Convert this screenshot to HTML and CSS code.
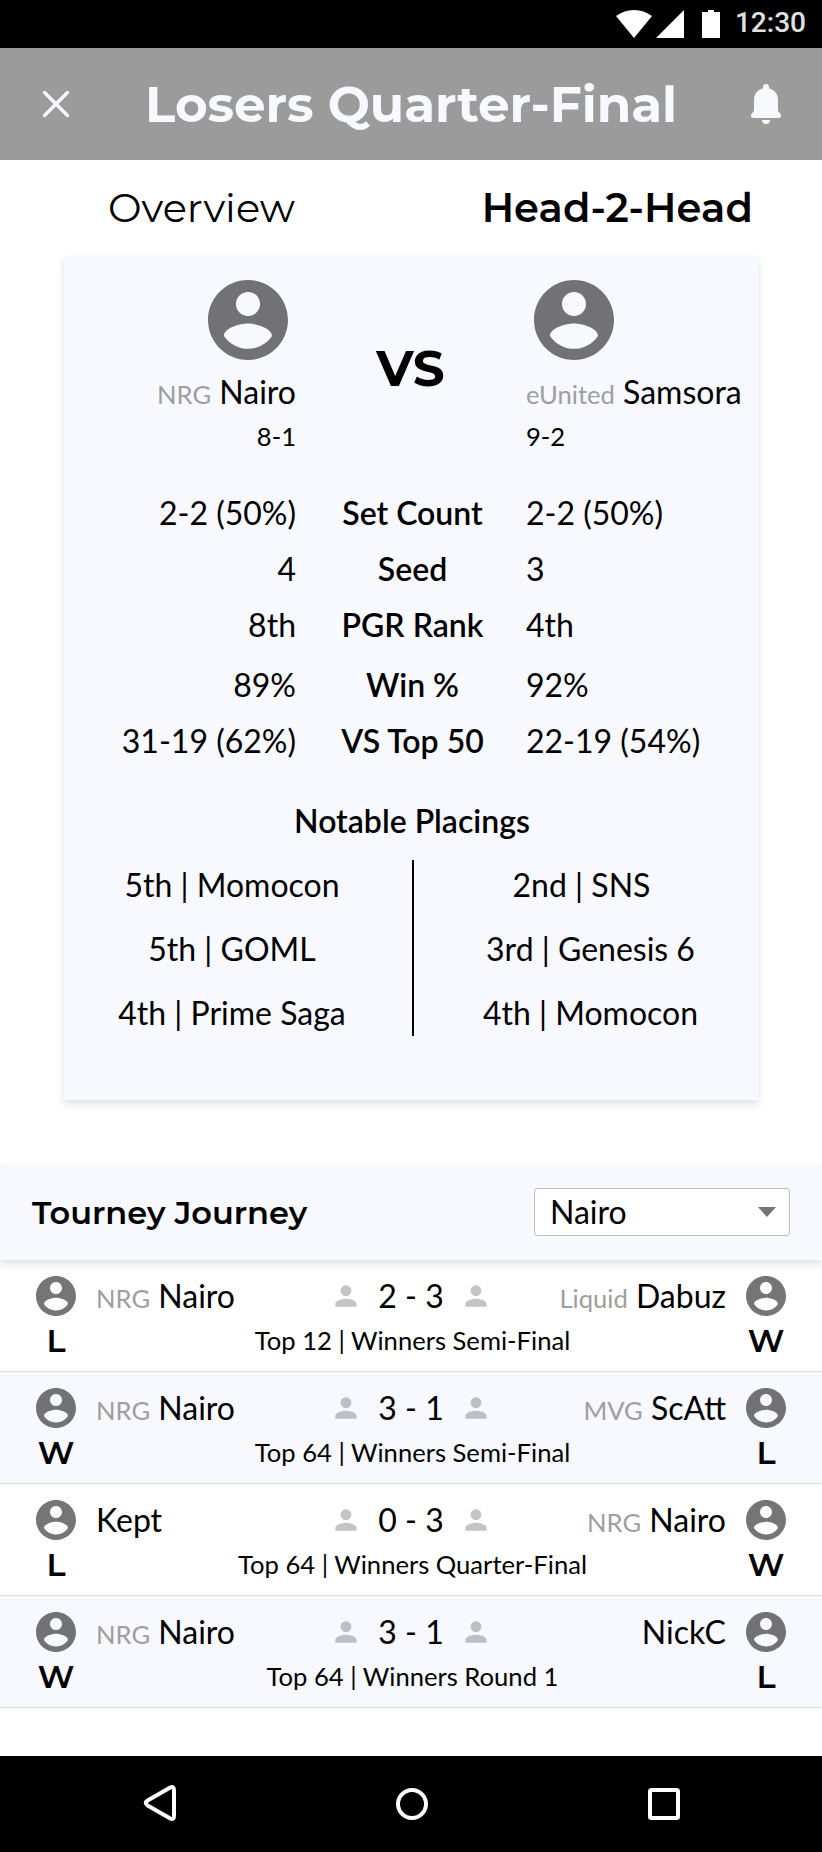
FILE: index.html
```html
<!DOCTYPE html>
<html lang="en">
<head>
<meta charset="utf-8">
<title>Losers Quarter-Final</title>
<link rel="stylesheet" href="styles.css">
</head>
<body>
<svg class="defs" width="0" height="0" aria-hidden="true">
  <symbol id="account" viewBox="2 2 20 20"><path d="M12 2C6.48 2 2 6.48 2 12s4.48 10 10 10 10-4.48 10-10S17.520 2 12 2zm0 3c1.66 0 3 1.340 3 3s-1.340 3-3 3-3-1.340-3-3 1.340-3 3-3zm0 14.200c-2.500 0-4.710-1.280-6-3.220.03-1.990 4-3.080 6-3.080 1.990 0 5.970 1.090 6 3.080-1.290 1.940-3.500 3.220-6 3.220z"/></symbol>
  <symbol id="person" viewBox="0 0 24 24"><path d="M12 12c2.210 0 4-1.790 4-4s-1.790-4-4-4-4 1.790-4 4 1.790 4 4 4zm0 2c-2.670 0-8 1.340-8 4v2h16v-2c0-2.660-5.330-4-8-4z"/></symbol>
</svg>

<div class="status">
  <svg width="104" height="28" viewBox="0 0 104 28"><path d="M0 6Q8 0 18 0T36 6L18 28zM40 28h28V0zM86 2h6V0h6v2h6v26H86z"/></svg>
  <span class="clock">12:30</span>
</div>

<header class="header">
  <svg class="close" width="28" height="28" viewBox="0 0 28 28"><path d="M2.500 2.500l23 23M25.500 2.500l-23 23"/></svg>
  <h1>Losers Quarter-Final</h1>
  <svg class="bell" width="30" height="40" viewBox="0 0 30 40"><path d="M15 0a3 3 0 0 0-3 3v1.300C6.500 5.800 3 10.200 3 16v9.500c0 1.500-.5 2.200-1.300 3C.7 29.400 0 30.300 0 31.800 0 33.200.8 34 2.200 34h25.600c1.400 0 2.200-.8 2.200-2.200 0-1.500-.7-2.400-1.700-3.300-.8-.8-1.300-1.500-1.300-3V16c0-5.800-3.500-10.200-9-11.700V3a3 3 0 0 0-3-3zM11 36h8a4 4 0 0 1-8 0z"/></svg>
</header>

<nav class="tabs"><span>Overview</span><span class="active">Head-2-Head</span></nav>

<section class="card">
  <div class="versus">
    <div class="player left">
      <svg class="avatar-lg"><use href="#account"/></svg>
      <div class="name"><small>NRG</small> Nairo</div>
      <div class="record">8-1</div>
    </div>
    <div class="vs">VS</div>
    <div class="player">
      <svg class="avatar-lg"><use href="#account"/></svg>
      <div class="name"><small>eUnited</small> Samsora</div>
      <div class="record">9-2</div>
    </div>
  </div>
  <div class="stats">
    <span>2-2 (50%)</span><b>Set Count</b><span>2-2 (50%)</span>
    <span>4</span><b>Seed</b><span>3</span>
    <span>8th</span><b>PGR Rank</b><span>4th</span>
    <span>89%</span><b>Win %</b><span>92%</span>
    <span>31-19 (62%)</span><b>VS Top 50</b><span>22-19 (54%)</span>
  </div>
  <h2 class="placings-title">Notable Placings</h2>
  <div class="placings">
    <ul><li>5th | Momocon</li><li>5th | GOML</li><li>4th | Prime Saga</li></ul>
    <i class="divider"></i>
    <ul><li class="nudged">2nd | SNS</li><li>3rd | Genesis 6</li><li>4th | Momocon</li></ul>
  </div>
</section>

<section class="journey">
  <div class="journey-head">
    <h2>Tourney Journey</h2>
    <div class="select">Nairo<svg width="18" height="10" viewBox="0 0 18 10"><path d="M0 0h18L9 10z"/></svg></div>
  </div>

  <div class="match">
    <div class="side"><svg class="avatar"><use href="#account"/></svg><b>L</b></div>
    <div class="info">
      <div class="name"><small>NRG</small> Nairo</div>
      <div class="score"><svg><use href="#person"/></svg><span>2 - 3</span><svg><use href="#person"/></svg></div>
      <div class="name right"><small>Liquid</small> Dabuz</div>
      <div class="round">Top 12 | Winners Semi-Final</div>
    </div>
    <div class="side"><svg class="avatar"><use href="#account"/></svg><b>W</b></div>
  </div>

  <div class="match">
    <div class="side"><svg class="avatar"><use href="#account"/></svg><b>W</b></div>
    <div class="info">
      <div class="name"><small>NRG</small> Nairo</div>
      <div class="score"><svg><use href="#person"/></svg><span>3 - 1</span><svg><use href="#person"/></svg></div>
      <div class="name right"><small>MVG</small> ScAtt</div>
      <div class="round">Top 64 | Winners Semi-Final</div>
    </div>
    <div class="side"><svg class="avatar"><use href="#account"/></svg><b>L</b></div>
  </div>

  <div class="match">
    <div class="side"><svg class="avatar"><use href="#account"/></svg><b>L</b></div>
    <div class="info">
      <div class="name">Kept</div>
      <div class="score"><svg><use href="#person"/></svg><span>0 - 3</span><svg><use href="#person"/></svg></div>
      <div class="name right"><small>NRG</small> Nairo</div>
      <div class="round">Top 64 | Winners Quarter-Final</div>
    </div>
    <div class="side"><svg class="avatar"><use href="#account"/></svg><b>W</b></div>
  </div>

  <div class="match">
    <div class="side"><svg class="avatar"><use href="#account"/></svg><b>W</b></div>
    <div class="info">
      <div class="name"><small>NRG</small> Nairo</div>
      <div class="score"><svg><use href="#person"/></svg><span>3 - 1</span><svg><use href="#person"/></svg></div>
      <div class="name right">NickC</div>
      <div class="round">Top 64 | Winners Round 1</div>
    </div>
    <div class="side"><svg class="avatar"><use href="#account"/></svg><b>L</b></div>
  </div>
</section>

<footer class="navbar">
  <svg viewBox="0 0 40 40"><path d="M30.300 3.500 8 16.200q-4.500 2.800 0 5.600L30.300 34.500Q34 36 34 32V6q0-4-3.700-2.500z"/></svg>
  <svg viewBox="0 0 40 40"><circle cx="20" cy="20" r="14"/></svg>
  <svg viewBox="0 0 40 40"><rect x="6" y="6" width="28" height="28" rx="1.500"/></svg>
</footer>
</body>
</html>
```
FILE: styles.css
```css
* { box-sizing: border-box; }
body {
  margin: 0;
  width: 822px;
  height: 1852px;
  display: flex;
  flex-direction: column;
  background: #fff;
  color: #000;
  font: 400 32px/38px Lato, sans-serif;
}
h1, h2, ul { margin: 0; padding: 0; }
svg { display: block; flex: none; }
.defs { position: absolute; }
small { font-size: 25.6px; color: #9e9e9e; }

.status {
  height: 48px;
  padding: 10px 16px 0 0;
  display: flex;
  justify-content: flex-end;
  gap: 15px;
  background: #000;
  fill: #fff;
}
.clock { font: 500 28px/24px Roboto, sans-serif; color: #e0e0e0; padding-top: 1px; }

.header {
  height: 112px;
  padding: 0 41px 0 42px;
  display: flex;
  align-items: center;
  justify-content: space-between;
  background: #9b9b9b;
  color: #f8f9ff;
}
.header h1 { font: 700 50px/61px Montserrat, Inter, sans-serif; letter-spacing: -.05px; padding-left: 1px; }
.close { fill: none; stroke: #f8f9ff; stroke-width: 3.5; stroke-linecap: round; }
.bell { fill: #f8f9ff; }

.tabs {
  height: 96px;
  padding: 23px 69px 0 108px;
  display: flex;
  justify-content: space-between;
  font: 400 40px/49px Montserrat, Inter, sans-serif;
}
.tabs .active { font-weight: 600; letter-spacing: .1px; }

.card {
  width: 694px;
  height: 844px;
  margin-left: 64px;
  padding-top: 24px;
  background: #f8f9ff;
  box-shadow: 0 4px 8px rgba(0, 0, 0, .12);
}
.versus, .stats {
  display: grid;
  grid-template-columns: 232px 230px 232px;
}
.player { white-space: nowrap; }
.player.left { text-align: right; }
.avatar-lg {
  width: 80px;
  height: 80px;
  margin: 0 8px 13px;
  fill: rgba(0, 0, 0, .54);
}
.left .avatar-lg { margin-left: auto; }
.record { font-size: 25.6px; line-height: 30px; padding-top: 8px; }
.vs {
  padding-top: 58px;
  padding-right: 1px;
  text-align: center;
  font: 700 50px/61px Montserrat, Inter, sans-serif;
}
.stats {
  padding-top: 43px;
  grid-template-rows: 56px 56px 60px 56px 38px;
}
.stats b { font-weight: 600; text-align: center; padding-left: 3px; }
.stats span:nth-child(3n + 1) { text-align: right; }
.placings-title { font: 600 32px/38px Lato, sans-serif; text-align: center; margin-top: 42px; padding-left: 2px; }
.placings {
  margin-top: 20px;
  display: grid;
  grid-template-columns: 336px 2px 336px;
  column-gap: 6px;
}
.placings ul {
  padding-top: 6px;
  display: grid;
  grid-auto-rows: 64px;
  list-style: none;
  text-align: center;
}
.placings ul:last-child { margin-left: 12px; margin-right: -5px; }
.nudged { padding-right: 18px; }
.divider { width: 2px; height: 176px; margin-left: 6px; background: #000; }

.journey { margin-top: 64px; }
.journey-head {
  position: relative;
  height: 96px;
  padding: 0 32px;
  display: flex;
  align-items: center;
  justify-content: space-between;
  background: #f8f9ff;
  box-shadow: 0 4px 8px rgba(0, 0, 0, .12);
}
.journey-head h2 { font: 600 32px/39px Montserrat, Inter, sans-serif; }
.select {
  width: 256px;
  height: 48px;
  padding: 0 13px 0 15px;
  display: flex;
  align-items: center;
  justify-content: space-between;
  background: #fff;
  border: 1px solid #bdbdbd;
  border-radius: 3px;
}
.select svg { fill: #757575; }

.match {
  height: 112px;
  padding: 16px 20px 0;
  display: grid;
  grid-template-columns: 72px 1fr 72px;
  border-bottom: 1px solid #d9dade;
}
.match:nth-child(odd) { background: #f8f9ff; }
.side { display: flex; flex-direction: column; align-items: center; }
.avatar { width: 40px; height: 40px; fill: rgba(0, 0, 0, .54); }
.side b { font: 600 32px/39px Montserrat, Inter, sans-serif; margin-top: 5px; }
.info {
  padding: 1px 4px 0;
  display: grid;
  grid-template-columns: 1fr 162px 1fr;
  grid-template-rows: 44px 34px;
}
.right { text-align: right; }
.info .score { display: flex; justify-content: space-between; }
.score svg { width: 32px; height: 32px; margin-top: 3px; fill: rgba(0, 0, 0, .23); }
.round { grid-column: 1 / -1; text-align: center; font-size: 25.6px; line-height: 30px; padding: 4px 0 0 3px; }

.navbar {
  height: 96px;
  margin-top: auto;
  padding: 0 138px 0 140px;
  display: flex;
  align-items: center;
  justify-content: space-between;
  background: #000;
}
.navbar svg { width: 40px; height: 40px; fill: none; stroke: #fff; stroke-width: 4; stroke-linejoin: round; }
```
